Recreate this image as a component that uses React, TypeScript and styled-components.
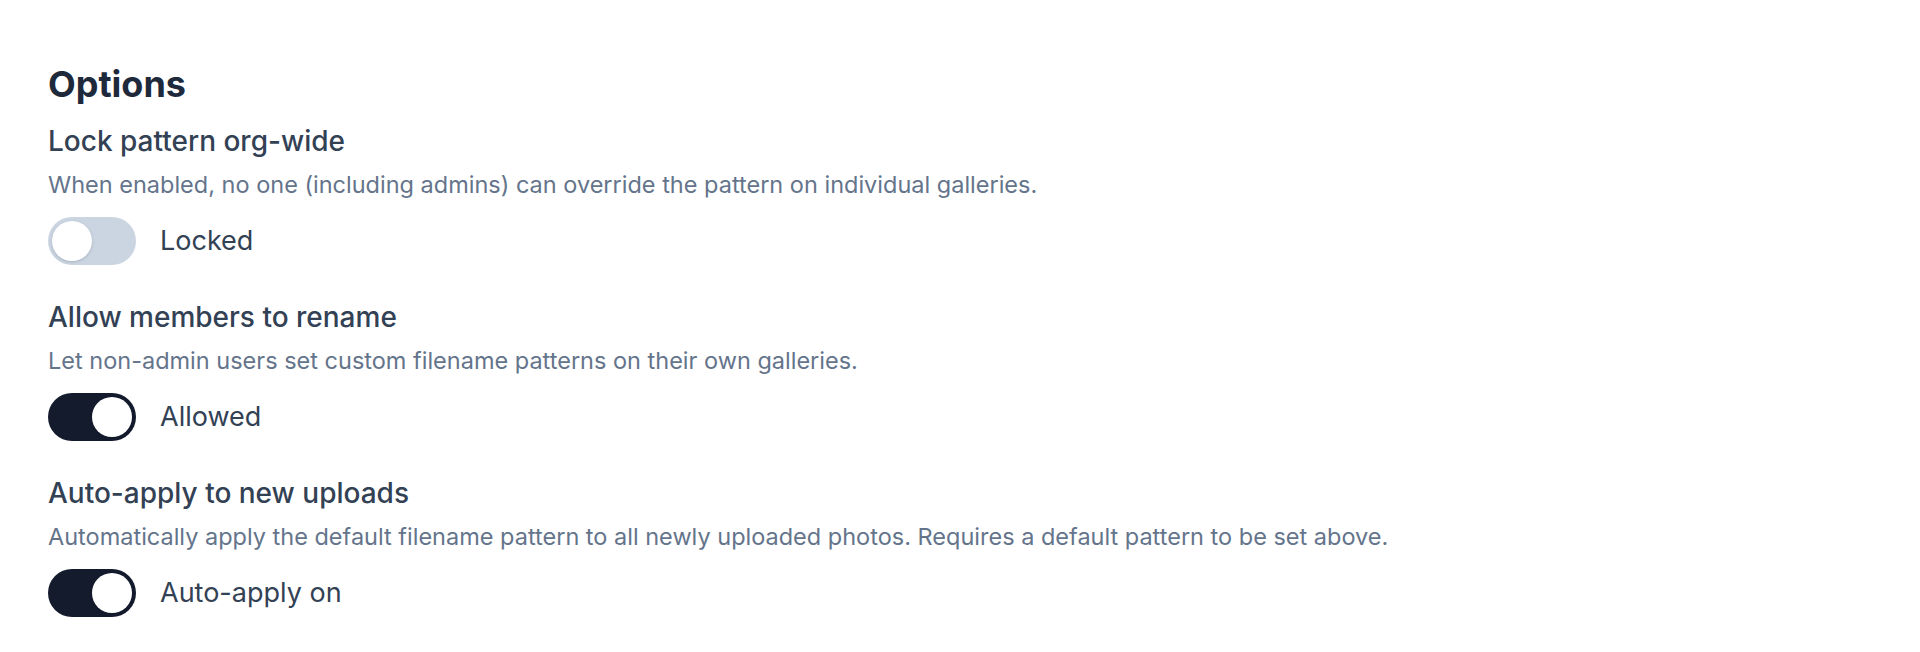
import styled, { createGlobalStyle } from "styled-components";

const GlobalStyle = createGlobalStyle`
  * {
    box-sizing: border-box;
  }
  body {
    margin: 0;
    background: #ffffff;
    font-family: Inter, "Noto Sans", sans-serif;
  }
`;

const Page = styled.div`
  padding: 64px 48px 40px;
  display: flex;
  flex-direction: column;
`;

const Heading = styled.h2`
  margin: 0 0 19px;
  font-size: 36px;
  line-height: 40px;
  font-weight: 700;
  color: #1e293b;
`;

const List = styled.div`
  display: flex;
  flex-direction: column;
  gap: 34px;
`;

const Section = styled.div`
  display: flex;
  flex-direction: column;
`;

const Title = styled.h3`
  margin: 0 0 10px;
  font-size: 28px;
  line-height: 36px;
  font-weight: 500;
  color: #334155;
`;

const Desc = styled.p`
  margin: 0 0 16px;
  font-size: 23.5px;
  line-height: 32px;
  font-weight: 400;
  color: #64748b;
`;

const ToggleRow = styled.label`
  display: flex;
  align-items: center;
  gap: 24px;
  height: 48px;
`;

const Track = styled.span<{ $on: boolean }>`
  display: inline-flex;
  align-items: center;
  width: 88px;
  height: 48px;
  padding: 4px;
  border-radius: 999px;
  background: ${({ $on }) => ($on ? "#141b2d" : "#cbd5e1")};
  flex-shrink: 0;
`;

const Knob = styled.span<{ $on: boolean }>`
  width: 40px;
  height: 40px;
  border-radius: 50%;
  background: #ffffff;
  box-shadow: 0 1px 3px rgba(15, 23, 42, 0.18);
  transform: translateX(${({ $on }) => ($on ? "40px" : "0")});
`;

const Label = styled.span`
  font-size: 27px;
  line-height: 48px;
  color: #334155;
`;

interface OptionProps {
  title: string;
  desc: string;
  on: boolean;
  label: string;
}

const Option = ({ title, desc, on, label }: OptionProps) => {
  return (
    <Section>
      <Title>{title}</Title>
      <Desc>{desc}</Desc>
      <ToggleRow>
        <Track $on={on}>
          <Knob $on={on} />
        </Track>
        <Label>{label}</Label>
      </ToggleRow>
    </Section>
  );
};

const options: OptionProps[] = [
  {
    title: "Lock pattern org-wide",
    desc: "When enabled, no one (including admins) can override the pattern on individual galleries.",
    on: false,
    label: "Locked",
  },
  {
    title: "Allow members to rename",
    desc: "Let non-admin users set custom filename patterns on their own galleries.",
    on: true,
    label: "Allowed",
  },
  {
    title: "Auto-apply to new uploads",
    desc: "Automatically apply the default filename pattern to all newly uploaded photos. Requires a default pattern to be set above.",
    on: true,
    label: "Auto-apply on",
  },
];

const App = () => {
  return (
    <>
      <GlobalStyle />
      <Page>
        <Heading>Options</Heading>
        <List>
          {options.map((o) => (
            <Option key={o.title} {...o} />
          ))}
        </List>
      </Page>
    </>
  );
};

export default App;
